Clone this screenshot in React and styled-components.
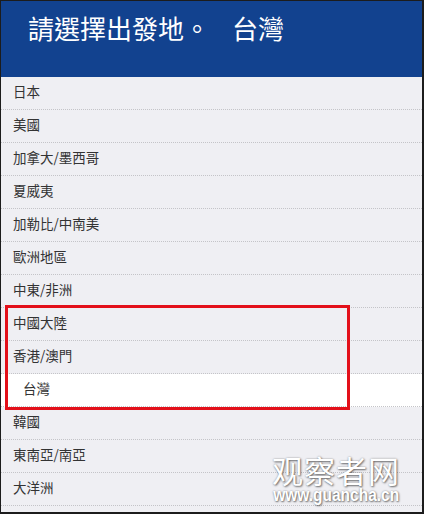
import React from "react";
import styled, { createGlobalStyle } from "styled-components";

const GlobalStyle = createGlobalStyle`
  html, body {
    margin: 0;
    padding: 0;
    background: #ffffff;
  }
`;

const Frame = styled.div`
  position: relative;
  box-sizing: border-box;
  width: 424px;
  height: 514px;
  overflow: hidden;
  background: #efeff3;
  border-top: 1px solid #1c1c1c;
  border-left: 1px solid #1c1c1c;
  border-right: 2px solid #1c1c1c;
  border-bottom: 2px solid #1c1c1c;
  font-family: "Noto Sans CJK TC", "Noto Sans CJK SC", sans-serif;
`;

const Header = styled.div`
  height: 76px;
  background: #12428f;
  color: #ffffff;
  display: flex;
  align-items: flex-start;
  padding: 8px 0 0 27px;
  box-sizing: border-box;
  font-size: 26px;
  line-height: 38px;
`;

const Place = styled.span`
  margin-left: 22px;
`;

const List = styled.ul`
  list-style: none;
  margin: 0;
  padding: 0;
`;

const Item = styled.li`
  height: 28px;
  padding-bottom: 4px;
  border-bottom: 1px dotted #c4c4c8;
  display: flex;
  align-items: center;
  padding-left: ${(p) => (p.$active ? "22px" : "12px")};
  background: ${(p) => (p.$active ? "#ffffff" : "transparent")};
  color: #333333;
  font-size: 13.5px;
  line-height: 24px;
`;

const Highlight = styled.div`
  position: absolute;
  left: 4px;
  top: 304px;
  width: 345px;
  height: 105px;
  box-sizing: border-box;
  border: 3px solid #e3101a;
  pointer-events: none;
`;

const Watermark = styled.div`
  position: absolute;
  left: 266px;
  top: 453px;
  width: 138px;
  display: flex;
  flex-direction: column;
  align-items: center;
  color: #ffffff;
  text-shadow: 1px 1px 2px rgba(0, 0, 0, 0.5), 0 0 2px rgba(0, 0, 0, 0.35);
  pointer-events: none;
`;

const WmTitle = styled.div`
  font-family: "Noto Sans CJK SC", sans-serif;
  font-size: 31px;
  line-height: 32px;
  letter-spacing: 1px;
`;

const WmUrl = styled.div`
  font-family: "Liberation Sans", sans-serif;
  font-weight: bold;
  font-size: 18px;
  line-height: 18px;
  transform: scaleX(0.86);
  white-space: nowrap;
`;

const regions = [
  "日本",
  "美國",
  "加拿大/墨西哥",
  "夏威夷",
  "加勒比/中南美",
  "歐洲地區",
  "中東/非洲",
  "中國大陸",
  "香港/澳門",
  "台灣",
  "韓國",
  "東南亞/南亞",
  "大洋洲",
];

const App = () => {
  return (
    <>
      <GlobalStyle />
      <Frame>
        <Header>
          請選擇出發地。<Place>台灣</Place>
        </Header>
        <List>
          {regions.map((r) => (
            <Item key={r} $active={r === "台灣"}>
              {r}
            </Item>
          ))}
        </List>
        <Highlight />
        <Watermark>
          <WmTitle>观察者网</WmTitle>
          <WmUrl>www.guancha.cn</WmUrl>
        </Watermark>
      </Frame>
    </>
  );
};

export default App;
